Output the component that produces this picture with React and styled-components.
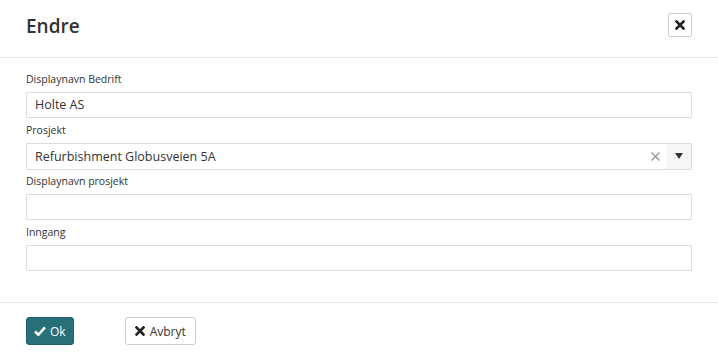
import React from 'react'
import styled, { createGlobalStyle } from 'styled-components'

const Global = createGlobalStyle`
  html, body { margin: 0; padding: 0; background: #fff; }
  body { font-family: "Open Sans", "Noto Sans", sans-serif; color: #333; }
  * { box-sizing: border-box; }
`

export default function App() {
  return (
    <>
      <Global />
      <Modal>
        <Header>
          <Title>Endre</Title>
          <CloseButton aria-label="Lukk">
            <XIcon size={10} />
          </CloseButton>
        </Header>
        <Body>
          <Field>
            <Label>Displaynavn Bedrift</Label>
            <Input defaultValue="Holte AS" />
          </Field>
          <Field>
            <Label>Prosjekt</Label>
            <Select>
              <SelectValue>Refurbishment Globusveien 5A</SelectValue>
              <ClearMark>
                <svg width="9" height="9" viewBox="0 0 9 9">
                  <path d="M0.5 0.5 L8.5 8.5 M8.5 0.5 L0.5 8.5" stroke="#999" strokeWidth="1.4" />
                </svg>
              </ClearMark>
              <ArrowBox>
                <svg width="8" height="6" viewBox="0 0 8 6">
                  <path d="M0 0 H8 L4 6 Z" fill="#333" />
                </svg>
              </ArrowBox>
            </Select>
          </Field>
          <Field>
            <Label>Displaynavn prosjekt</Label>
            <Input />
          </Field>
          <Field>
            <Label>Inngang</Label>
            <Input />
          </Field>
        </Body>
        <Footer>
          <Button primary>
            <CheckIcon />
            Ok
          </Button>
          <Button>
            <XIcon size={10} />
            Avbryt
          </Button>
        </Footer>
      </Modal>
    </>
  )
}

function XIcon({ size }) {
  return (
    <svg width={size} height={size} viewBox="0 0 10 10">
      <path d="M1.5 1.5 L8.5 8.5 M8.5 1.5 L1.5 8.5" stroke="#222" strokeWidth="2.6" strokeLinecap="square" />
    </svg>
  )
}

function CheckIcon() {
  return (
    <svg width="12" height="10" viewBox="0 0 13 11">
      <path d="M1 6 L4.8 9.6 L12 1.6" stroke="#fff" strokeWidth="2.8" fill="none" strokeLinejoin="round" />
    </svg>
  )
}

const Modal = styled.div`
  width: 718px;
  height: 359px;
  background: #fff;
  display: flex;
  flex-direction: column;
`
const Header = styled.div`
  height: 58px;
  padding: 0 26px;
  display: flex;
  align-items: center;
  justify-content: space-between;
  border-bottom: 1px solid #e5e5e5;
`
const Title = styled.h4`
  margin: 0;
  font-size: 19px;
  font-weight: 600;
  color: #333;
  line-height: 1;
  margin-top: -4px;
`
const CloseButton = styled.button`
  width: 24px;
  height: 24px;
  margin-top: -6px;
  padding: 0;
  border: 1px solid #ccc;
  border-radius: 2px;
  background: #fff;
  display: flex;
  align-items: center;
  justify-content: center;
`
const Body = styled.div`
  padding: 14px 26px 0;
  display: flex;
  flex-direction: column;
  height: 246px;
  border-bottom: 1px solid #e5e5e5;
`
const Field = styled.div`
  display: flex;
  flex-direction: column;
`
const Label = styled.label`
  font-size: 10.5px;
  line-height: 15px;
  color: #333;
  margin-bottom: 5px;
`
const Input = styled.input`
  height: 26px;
  border: 1px solid #ddd;
  border-radius: 1px;
  padding: 0 8px;
  font-family: inherit;
  font-size: 12.5px;
  color: #333;
  outline: none;
  margin-bottom: 5px;
`
const Select = styled.div`
  height: 27px;
  border: 1px solid #ddd;
  border-radius: 1px;
  display: flex;
  align-items: center;
  margin-bottom: 4px;
`
const SelectValue = styled.span`
  flex: 1;
  padding-left: 8px;
  font-size: 12.5px;
  color: #333;
`
const ClearMark = styled.span`
  width: 22px;
  display: flex;
  justify-content: center;
`
const ArrowBox = styled.span`
  width: 25px;
  height: 100%;
  background: #f7f7f7;
  display: flex;
  align-items: center;
  justify-content: center;
`
const Footer = styled.div`
  padding: 14px 26px;
  display: flex;
  gap: 51px;
`
const Button = styled.button`
  height: 28px;
  padding: 0 ${p => (p.primary ? '7px' : '9px')};
  border-radius: 3px;
  border: 1px solid ${p => (p.primary ? '#235f67' : '#ccc')};
  background: ${p => (p.primary ? '#296f78' : '#fff')};
  color: ${p => (p.primary ? '#fff' : '#333')};
  font-family: inherit;
  font-size: 12px;
  display: flex;
  align-items: center;
  gap: ${p => (p.primary ? '4px' : '5px')};
`
